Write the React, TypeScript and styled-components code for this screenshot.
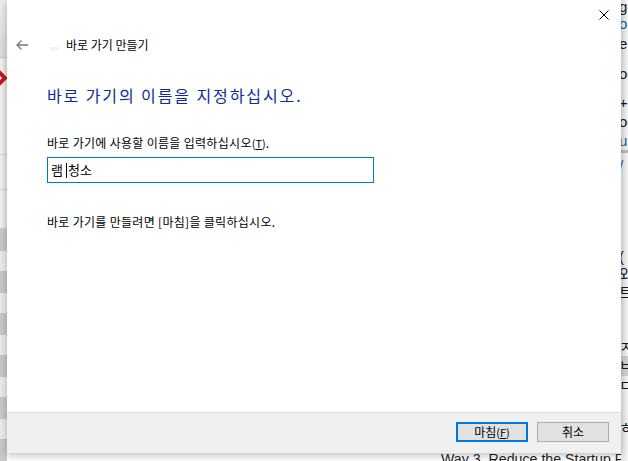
import React from 'react'
import styled, { createGlobalStyle } from 'styled-components'

const GlobalStyle = createGlobalStyle`
  html, body {
    margin: 0;
    padding: 0;
    background: #ffffff;
  }
  body {
    font-family: "Noto Sans CJK KR", "Noto Sans", sans-serif;
  }
`

const Desktop = styled.div`
  position: relative;
  width: 628px;
  height: 461px;
  overflow: hidden;
  background: #ffffff;
  display: grid;
  grid-template-columns: 7px 1fr 7px;
  grid-template-rows: 461px;
`

const LeftPane = styled.div`
  background: linear-gradient(to right, #f4f4f4, #e4e4e4);
  display: flex;
  flex-direction: column;
  overflow: hidden;
`

const PaneHeader = styled.div`
  flex: none;
  height: 57px;
  border-bottom: 1px solid #c9c9c9;
  background: linear-gradient(to bottom, #eeeeee, #dcdcdc);
`

const RedMark = styled.div`
  flex: none;
  height: 40px;
  display: flex;
  align-items: center;
  margin-left: -10px;
`

const Spacer = styled.div<{ h: number }>`
  flex: none;
  height: ${({ h }) => h}px;
  border-bottom: 1px solid #d2d2d2;
`

const Stripe = styled.div<{ dark: boolean }>`
  flex: none;
  height: ${({ dark }) => (dark ? 22 : 20)}px;
  background: ${({ dark }) => (dark ? '#c9c9c9' : '#ececec')};
`

const Middle = styled.div`
  display: flex;
  align-items: flex-end;
  padding-left: 434px;
  overflow: hidden;
`

const ArticleLine = styled.div`
  font: 14.2px/14px "Liberation Sans", Arial, sans-serif;
  color: #1f1f2a;
  white-space: nowrap;
  margin-bottom: -5px;
`

const RightPane = styled.div`
  background: linear-gradient(to right, #e6e6e6, #f6f6f6);
  display: flex;
  flex-direction: column;
  overflow: hidden;
`

const Frag = styled.div<{ h: number; color?: string; bg?: string }>`
  flex: none;
  height: ${({ h }) => h}px;
  line-height: ${({ h }) => h}px;
  font-size: 15px;
  font-family: "Liberation Sans", "Noto Sans CJK KR", sans-serif;
  color: ${({ color }) => color || '#1a1a1a'};
  background: ${({ bg }) => bg || 'transparent'};
  white-space: nowrap;
  margin-left: -2px;
`

const Dialog = styled.div`
  position: absolute;
  left: 7px;
  top: 0;
  width: 614px;
  height: 453px;
  background: #ffffff;
  box-shadow: 0 2px 8px rgba(0, 0, 0, 0.28);
  display: flex;
  flex-direction: column;
  font-size: 12px;
  color: #000;
`

const TopBar = styled.div`
  height: 30px;
  display: flex;
  justify-content: flex-end;
  align-items: center;
  padding-right: 12px;
`

const CloseBtn = styled.div`
  width: 10px;
  height: 10px;
  display: flex;
`

const NavRow = styled.div`
  height: 30px;
  display: flex;
  align-items: center;
  padding-left: 9px;
`

const BackArrow = styled.div`
  width: 12px;
  height: 10px;
  display: flex;
`

const AppIcon = styled.div`
  width: 8px;
  height: 3px;
  margin: 6px 0 0 22px;
  background: #f0f0f0;
`

const Title = styled.div`
  margin-left: 8px;
  line-height: 16px;
  font-size: 12px;
`

const Body = styled.div`
  flex: 1;
  padding: 25px 0 0 40px;
  display: flex;
  flex-direction: column;
`

const Heading = styled.div`
  font-size: 16px;
  line-height: 20px;
  color: #0b2c9c;
  letter-spacing: 1.9px;
`

const FieldLabel = styled.div`
  margin-top: 30px;
  line-height: 16px;
  letter-spacing: 0.3px;
`

const Key = styled.span`
  font-size: 11px;
  letter-spacing: 0;
  span {
    text-decoration: underline;
  }
`

const Field = styled.div`
  margin-top: 6px;
  width: 327px;
  height: 26px;
  box-sizing: border-box;
  border: 1px solid #0078d7;
  padding-left: 3px;
  font-size: 13px;
  line-height: 23px;
  white-space: pre;
`

const Caret = styled.span`
  display: inline-block;
  width: 1px;
  height: 15px;
  background: #000;
  vertical-align: -3px;
  margin: 0 1px 0 3px;
`

const Hint = styled.div`
  margin-top: 31px;
  line-height: 16px;
  letter-spacing: 0.3px;
`

const Footer = styled.div`
  height: 41px;
  background: #f0f0f0;
  border-top: 1px solid #dfdfdf;
  display: flex;
  justify-content: flex-end;
  align-items: flex-start;
  padding: 9px 12px 0 0;
  gap: 9px;
  box-sizing: border-box;
`

const Button = styled.div<{ primary?: boolean }>`
  width: 72px;
  height: 20px;
  box-sizing: border-box;
  background: #e1e1e1;
  border: ${({ primary }) => (primary ? '2px solid #0078d7' : '1px solid #adadad')};
  display: flex;
  align-items: center;
  justify-content: center;
  font-size: 12px;
  line-height: 16px;
`

export default function App() {
  const stripes = Array.from({ length: 12 }, (_, i) => i % 2 === 0)
  return (
    <>
      <GlobalStyle />
      <Desktop>
        <LeftPane>
          <PaneHeader />
          <RedMark>
            <svg width="17" height="30" viewBox="0 0 17 30">
              <path d="M2 2 L15 15 L2 28" stroke="#d0101a" strokeWidth="4" fill="none" />
            </svg>
          </RedMark>
          <Spacer h={56} />
          <Spacer h={34} />
          <Spacer h={38} />
          {stripes.map((dark, i) => (
            <Stripe key={i} dark={dark} />
          ))}
        </LeftPane>
        <Middle>
          <ArticleLine>Way 3. Reduce the Startup Programs</ArticleLine>
        </Middle>
        <RightPane>
          <Frag h={14}>g</Frag>
          <Frag h={20} color="#1a5fb4">o</Frag>
          <Frag h={20}>e</Frag>
          <Frag h={40}>og</Frag>
          <Frag h={18}>+</Frag>
          <Frag h={19}>oc</Frag>
          <Frag h={19} color="#1a5fb4">us</Frag>
          <Frag h={3} bg="#bdbdbd" />
          <Frag h={25} color="#1a5fb4">/</Frag>
          <Frag h={70} />
          <Frag h={18}>(</Frag>
          <Frag h={18}>와</Frag>
          <Frag h={18}>트</Frag>
          <Frag h={36} />
          <Frag h={18}>ㅈ</Frag>
          <Frag h={20} bg="#cfcfcf">ㅂ</Frag>
          <Frag h={20}>ㄷ</Frag>
          <Frag h={22} />
          <Frag h={20}>ㅎ</Frag>
        </RightPane>
        <Dialog>
          <TopBar>
            <CloseBtn>
              <svg width="10" height="10" viewBox="0 0 10 10">
                <path d="M0.5 0.5 L9.5 9.5 M9.5 0.5 L0.5 9.5" stroke="#000" strokeWidth="1" />
              </svg>
            </CloseBtn>
          </TopBar>
          <NavRow>
            <BackArrow>
              <svg width="12" height="10" viewBox="0 0 12 10">
                <path d="M5.5 0.5 L1 5 L5.5 9.5 M1 5 L12 5" stroke="#777" strokeWidth="1.3" fill="none" />
              </svg>
            </BackArrow>
            <AppIcon />
            <Title>바로 가기 만들기</Title>
          </NavRow>
          <Body>
            <Heading>바로 가기의 이름을 지정하십시오.</Heading>
            <FieldLabel>
              바로 가기에 사용할 이름을 입력하십시오
              <Key>
                (<span>T</span>)
              </Key>
              .
            </FieldLabel>
            <Field>
              {'램'}
              <Caret />
              {'청소'}
            </Field>
            <Hint>바로 가기를 만들려면 [마침]을 클릭하십시오.</Hint>
          </Body>
          <Footer>
            <Button primary>
              마침
              <Key>
                (<span>F</span>)
              </Key>
            </Button>
            <Button>취소</Button>
          </Footer>
        </Dialog>
      </Desktop>
    </>
  )
}
